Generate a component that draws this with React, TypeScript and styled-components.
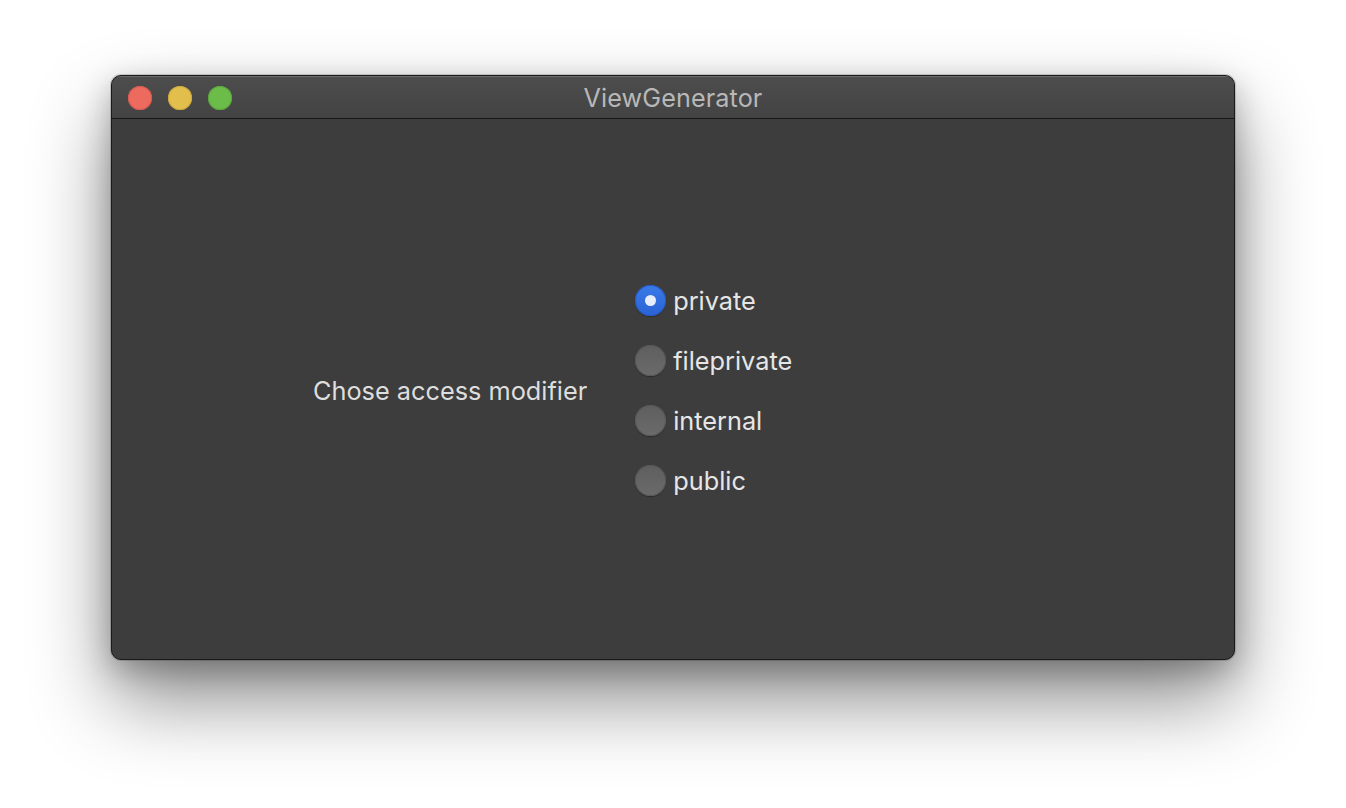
import React, { useState } from "react";
import styled, { createGlobalStyle } from "styled-components";

const Global = createGlobalStyle`
  html, body { margin: 0; padding: 0; background: #ffffff; }
  body { font-family: Inter, "Noto Sans", sans-serif; -webkit-font-smoothing: antialiased; }
  #root { width: 1346px; height: 808px; overflow: hidden; }
`;

const Page = styled.div`
  width: 1346px;
  height: 808px;
  box-sizing: border-box;
  padding: 75px 0 0 111px;
  background: #ffffff;
`;

const Window = styled.div`
  width: 1124px;
  height: 585px;
  box-sizing: border-box;
  border-radius: 10px;
  border: 1px solid #1a1a1a;
  background: #3d3d3d;
  display: flex;
  flex-direction: column;
  overflow: hidden;
  box-shadow: 0 0 0 1px rgba(0,0,0,0.15), 0 40px 80px rgba(0,0,0,0.45), 0 10px 30px rgba(0,0,0,0.25);
`;

const TitleBar = styled.div`
  height: 43px;
  flex: none;
  position: relative;
  display: flex;
  align-items: center;
  justify-content: center;
  background: linear-gradient(#4d4d4d, #434343);
  border-top: 1px solid #6a6a6a;
  border-bottom: 1px solid #161616;
  box-sizing: border-box;
`;

const Lights = styled.div`
  position: absolute;
  left: 16px;
  top: 0;
  bottom: 0;
  display: flex;
  align-items: center;
  gap: 16px;
`;

const Light = styled.span<{ $c: string; $b: string }>`
  width: 24px;
  height: 24px;
  border-radius: 50%;
  background: ${(p) => p.$c};
  box-shadow: inset 0 0 0 1px ${(p) => p.$b};
`;

const Title = styled.div`
  color: #b8b8b8;
  font-size: 25.2px;
  letter-spacing: 0.1px;
  margin-top: 1px;
`;

const Content = styled.div`
  flex: 1;
  display: flex;
  align-items: center;
  padding: 2px 0 0 201px;
  gap: 48px;
`;

const Label = styled.div`
  color: #dedede;
  font-size: 25.3px;
`;

const Group = styled.div`
  display: flex;
  flex-direction: column;
  gap: 28px;
`;

const Option = styled.label`
  display: flex;
  align-items: center;
  gap: 7px;
  height: 32px;
  color: #e6e6e6;
  font-size: 25.3px;
  cursor: default;
`;

const Dot = styled.span<{ $on: boolean }>`
  width: 31px;
  height: 31px;
  border-radius: 50%;
  box-sizing: border-box;
  display: flex;
  align-items: center;
  justify-content: center;
  background: ${(p) =>
    p.$on ? "linear-gradient(#3a7be8, #2a62d4)" : "linear-gradient(#5e5e5e, #6b6b6b)"};
  box-shadow: ${(p) =>
    p.$on
      ? "inset 0 0 0 1px #2659c0, 0 1px 1px rgba(0,0,0,0.3)"
      : "inset 0 0 0 1px #575757, 0 1px 1px rgba(0,0,0,0.3)"};
  &::after {
    content: "";
    display: ${(p) => (p.$on ? "block" : "none")};
    width: 11px;
    height: 11px;
    border-radius: 50%;
    background: #e8eefc;
  }
`;

const options = ["private", "fileprivate", "internal", "public"];

export default function App() {
  const [sel, setSel] = useState("private");
  return (
    <>
      <Global />
      <Page>
        <Window>
          <TitleBar>
            <Lights>
              <Light $c="#ec6a5e" $b="#d55a4f" />
              <Light $c="#e2bf4c" $b="#c9a83e" />
              <Light $c="#6cbc4a" $b="#5aa63c" />
            </Lights>
            <Title>ViewGenerator</Title>
          </TitleBar>
          <Content>
            <Label>Chose access modifier</Label>
            <Group>
              {options.map((o) => (
                <Option key={o} onClick={() => setSel(o)}>
                  <Dot $on={sel === o} />
                  {o}
                </Option>
              ))}
            </Group>
          </Content>
        </Window>
      </Page>
    </>
  );
}
